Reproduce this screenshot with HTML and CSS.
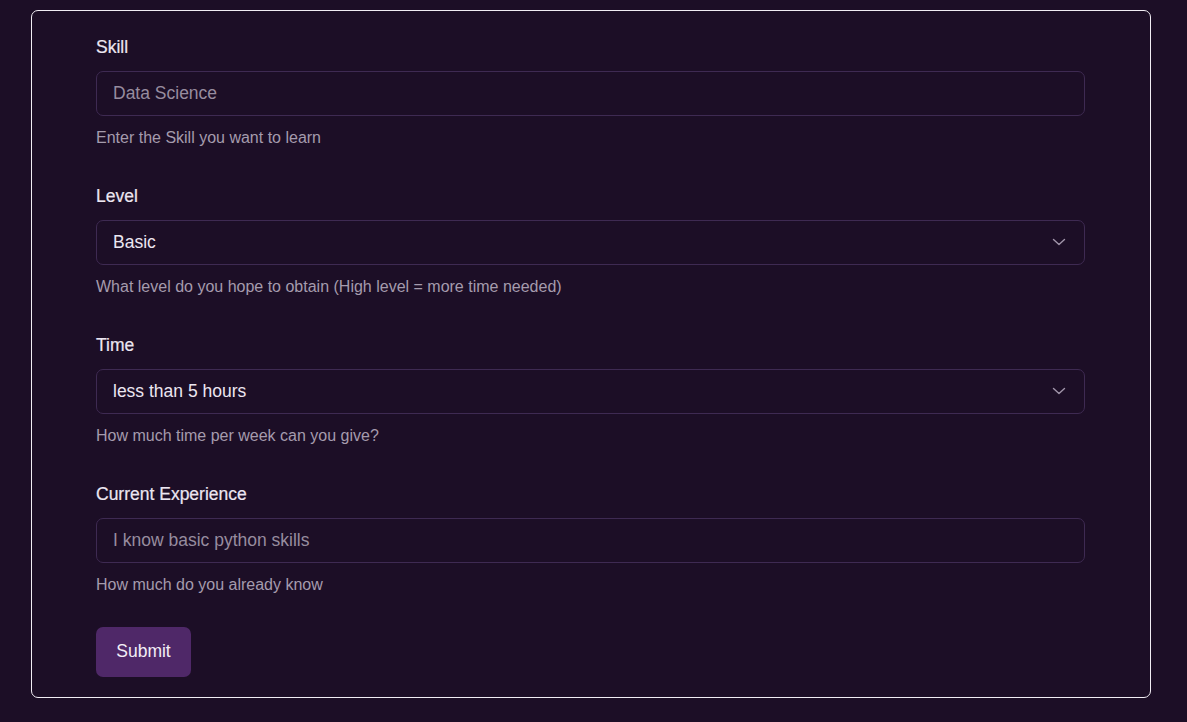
FILE: index.html
```html
<!DOCTYPE html>
<html lang="en">
<head>
<meta charset="utf-8">
<title>Learning Plan</title>
<link rel="stylesheet" href="styles.css">
</head>
<body>
<div class="page">
  <form class="card">
    <div class="field">
      <label class="label" for="skill">Skill</label>
      <input class="control" id="skill" type="text" placeholder="Data Science">
      <p class="help">Enter the Skill you want to learn</p>
    </div>
    <div class="field">
      <label class="label" for="level">Level</label>
      <div class="select-wrap">
        <select class="control select" id="level">
          <option>Basic</option>
          <option>Intermediate</option>
          <option>Advanced</option>
        </select>
        <svg class="chevron" width="14" height="8" viewBox="0 0 14 8" aria-hidden="true"><path d="M1.5 1.5 L7 6.5 L12.5 1.5" fill="none" stroke="currentColor" stroke-width="1.4" stroke-linecap="round" stroke-linejoin="round"/></svg>
      </div>
      <p class="help">What level do you hope to obtain (High level = more time needed)</p>
    </div>
    <div class="field">
      <label class="label" for="time">Time</label>
      <div class="select-wrap">
        <select class="control select" id="time">
          <option>less than 5 hours</option>
          <option>5-10 hours</option>
          <option>more than 10 hours</option>
        </select>
        <svg class="chevron" width="14" height="8" viewBox="0 0 14 8" aria-hidden="true"><path d="M1.5 1.5 L7 6.5 L12.5 1.5" fill="none" stroke="currentColor" stroke-width="1.4" stroke-linecap="round" stroke-linejoin="round"/></svg>
      </div>
      <p class="help">How much time per week can you give?</p>
    </div>
    <div class="field">
      <label class="label" for="exp">Current Experience</label>
      <input class="control" id="exp" type="text" placeholder="I know basic python skills">
      <p class="help">How much do you already know</p>
    </div>
    <button class="submit" type="button">Submit</button>
  </form>
</div>
</body>
</html>
```
FILE: styles.css
```css
* { box-sizing: border-box; }
html, body {
  margin: 0;
  background: #1c0e26;
  font-family: "Liberation Sans", Arial, sans-serif;
}
.page {
  padding: 10px 0 0 31px;
  height: 722px;
  overflow: hidden;
}
.card {
  width: 1120px;
  border: 1px solid #f1edf4;
  border-radius: 7px;
  padding: 26px 65px 20px 64px;
  display: flex;
  flex-direction: column;
}
.field {
  display: flex;
  flex-direction: column;
  margin-bottom: 36px;
}
.field:last-of-type { margin-bottom: 30px; }
.label {
  display: block;
  font-size: 17.5px;
  line-height: 20px;
  color: #ece6f1;
  margin-bottom: 14px;
  -webkit-text-stroke: 0.2px #ece6f1;
}
.control {
  display: block;
  width: 100%;
  height: 45px;
  border: 1px solid #3e2a52;
  border-radius: 7px;
  background: #1c0e26;
  color: #ece6f1;
  font-family: "Liberation Sans", Arial, sans-serif;
  font-size: 17.5px;
  padding: 0 40px 1px 16px;
  outline: none;
}
.control::placeholder { color: #978c9f; opacity: 1; }
.select-wrap { position: relative; }
.select {
  appearance: none;
  -webkit-appearance: none;
}
.chevron {
  position: absolute;
  right: 19px;
  top: 18px;
  color: #a195aa;
  pointer-events: none;
}
.help {
  margin: 10px 0 0 0;
  font-size: 16px;
  line-height: 24px;
  color: #a59bad;
}
.submit {
  align-self: flex-start;
  width: 95px;
  height: 50px;
  border: none;
  border-radius: 7px;
  background: #4f2868;
  color: #f3eef6;
  font-family: "Liberation Sans", Arial, sans-serif;
  font-size: 17.5px;
  padding: 0 0 2px 0;
  cursor: pointer;
}
```
